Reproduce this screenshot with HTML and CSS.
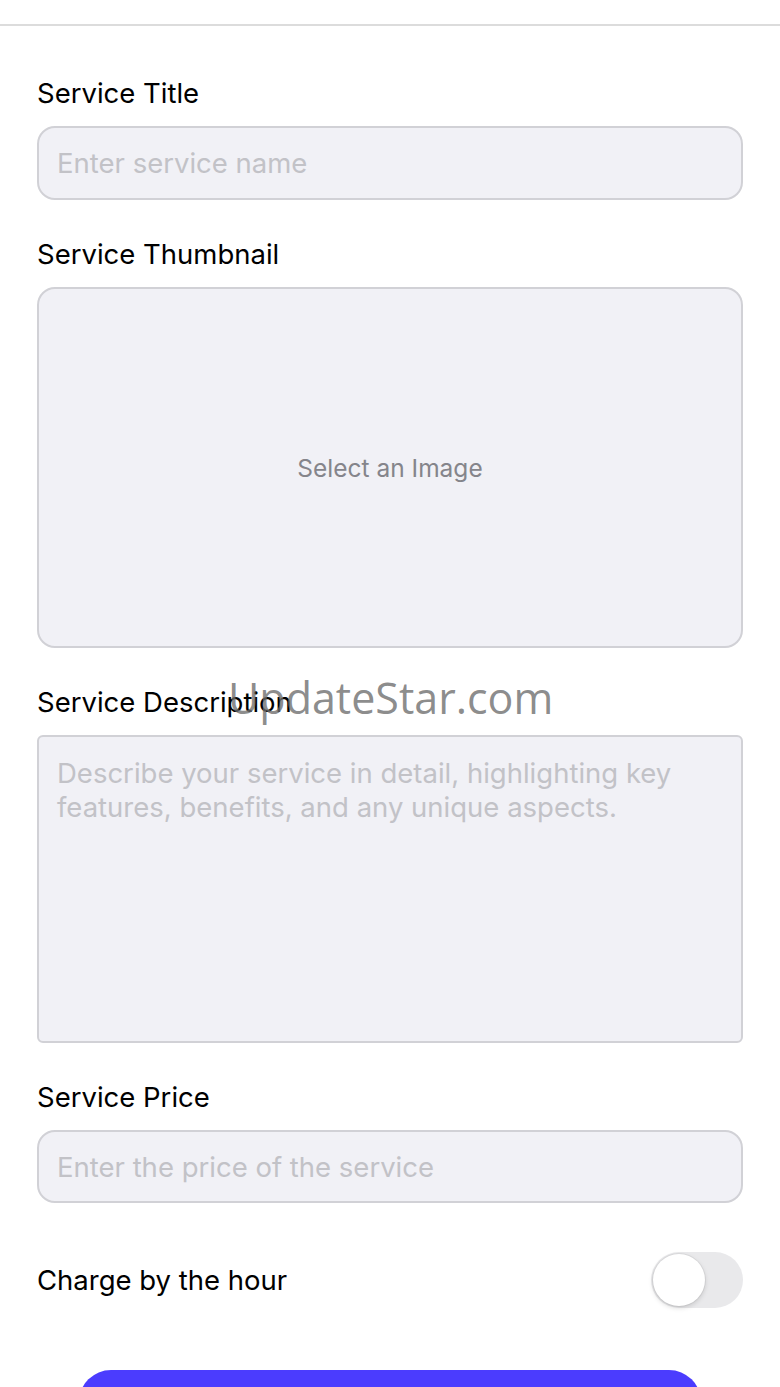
FILE: index.html
```html
<!DOCTYPE html>
<html lang="en">
<head>
  <meta charset="UTF-8">
  <meta name="viewport" content="width=device-width, initial-scale=1.0">
  <title>New Service</title>
  <link rel="stylesheet" href="styles.css">
</head>
<body>
  <div class="topbar"></div>

  <form class="service-form">
    <div class="field">
      <label for="title">Service Title</label>
      <input type="text" id="title" placeholder="Enter service name">
    </div>

    <div class="field">
      <label>Service Thumbnail</label>
      <div class="thumb-picker">Select an Image</div>
    </div>

    <div class="field">
      <label for="desc">Service Description</label>
      <textarea id="desc" placeholder="Describe your service in detail, highlighting key features, benefits, and any unique aspects."></textarea>
    </div>

    <div class="field">
      <label for="price">Service Price</label>
      <input type="text" id="price" placeholder="Enter the price of the service">
    </div>

    <div class="toggle-row">
      <span>Charge by the hour</span>
      <div class="switch"><div class="knob"></div></div>
    </div>

    <button type="button" class="btn-primary">Save Service</button>
  </form>

  <div class="watermark">UpdateStar.com</div>
</body>
</html>
```

FILE: styles.css
```css
* {
  box-sizing: border-box;
  margin: 0;
  padding: 0;
}

body {
  font-family: Inter, 'Liberation Sans', sans-serif;
  color: #000;
  background-color: #fff;
  width: 780px;
  height: 1387px;
  overflow: hidden;
  position: relative;
}

/* 顶部栏 */
.topbar {
  height: 26px;
  border-bottom: 2px solid #dcdcdc;
}

/* 表单 */
.service-form {
  padding: 50px 37px 0;
}

.field {
  display: flex;
  flex-direction: column;
  margin-bottom: 37px;
}

.field label {
  font-size: 27.5px;
  line-height: 34px;
  margin-bottom: 16px;
}

.field input,
.field textarea,
.thumb-picker {
  width: 100%;
  background-color: #f1f1f6;
  border: 2px solid #d1d1d6;
  border-radius: 18px;
  font-family: Inter, 'Liberation Sans', sans-serif;
  font-size: 27.5px;
  color: #000;
  outline: none;
}

.field input {
  height: 74px;
  padding: 0 18px;
}

.field textarea {
  height: 308px;
  padding: 19px 18px;
  line-height: 34px;
  resize: none;
  border-radius: 6px;
}

.field input::placeholder,
.field textarea::placeholder {
  color: #c2c2c7;
}

#price {
  height: 73px;
}

.thumb-picker {
  height: 361px;
  display: flex;
  align-items: center;
  justify-content: center;
  font-size: 24.5px;
  color: #85858b;
}

/* 开关 */
.toggle-row {
  display: flex;
  justify-content: space-between;
  align-items: center;
  margin-top: 49px;
  font-size: 27.5px;
}

.switch {
  width: 92px;
  height: 56px;
  border-radius: 28px;
  background-color: #e9e9eb;
  padding: 2px;
}

.knob {
  width: 52px;
  height: 52px;
  border-radius: 50%;
  background-color: #fff;
  box-shadow: 0 2px 5px rgba(0, 0, 0, 0.15), 0 0 0 1px rgba(0, 0, 0, 0.05);
}

.btn-primary {
  display: block;
  width: 622px;
  height: 64px;
  margin: 62px auto 0;
  border: none;
  border-radius: 32px;
  background-color: #4b3cfe;
  color: #fff;
  font-size: 27.5px;
  font-weight: 600;
}

/* 水印 */
.watermark {
  position: absolute;
  left: 228px;
  top: 668px;
  font-family: 'Open Sans', sans-serif;
  font-size: 43px;
  color: rgba(110, 110, 110, 0.8);
  pointer-events: none;
}
```
